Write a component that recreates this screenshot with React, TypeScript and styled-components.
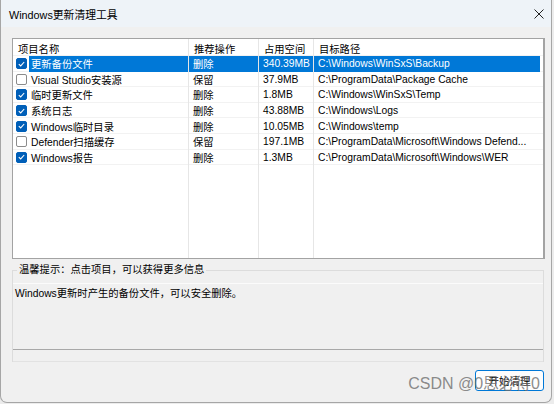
import React from "react"
import styled, { createGlobalStyle } from "styled-components"

const GlobalStyle = createGlobalStyle`
  html, body {
    margin: 0;
    padding: 0;
    background: #ececec;
  }
  body {
    font-family: "Liberation Sans", "Noto Sans CJK SC", sans-serif;
    font-size: 10.3px;
    color: #000;
  }
`

type Item = {
  name: string
  action: string
  size: string
  path: string
  checked: boolean
}

const items: ReadonlyArray<Item> = [
  { name: "更新备份文件", action: "删除", size: "340.39MB", path: "C:\\Windows\\WinSxS\\Backup", checked: true },
  { name: "Visual Studio安装源", action: "保留", size: "37.9MB", path: "C:\\ProgramData\\Package Cache", checked: false },
  { name: "临时更新文件", action: "删除", size: "1.8MB", path: "C:\\Windows\\WinSxS\\Temp", checked: true },
  { name: "系统日志", action: "删除", size: "43.88MB", path: "C:\\Windows\\Logs", checked: true },
  { name: "Windows临时目录", action: "删除", size: "10.05MB", path: "C:\\Windows\\temp", checked: true },
  { name: "Defender扫描缓存", action: "保留", size: "197.1MB", path: "C:\\ProgramData\\Microsoft\\Windows Defend...", checked: false },
  { name: "Windows报告", action: "删除", size: "1.3MB", path: "C:\\ProgramData\\Microsoft\\Windows\\WER", checked: true },
]

const Window = styled.div`
  position: relative;
  width: 550px;
  height: 402px;
  border: 1px solid #a6a6a6;
  border-top: none;
  border-radius: 0 0 7px 7px;
  background: #f0f0f0;
  display: flex;
  flex-direction: column;
  overflow: hidden;
`

const TitleBar = styled.div`
  height: 27px;
  flex: none;
  background: #eef3f8;
  display: flex;
  align-items: center;
  justify-content: space-between;
  padding: 0 7px 0 8px;
  font-size: 10.8px;
`

const Body = styled.div`
  flex: 1;
  display: flex;
  flex-direction: column;
  padding: 11px 6px 0 11px;
`

const List = styled.div`
  height: 219px;
  flex: none;
  background: #fff;
  border: 1px solid #a3a3a3;
  border-right-width: 2px;
  display: flex;
  flex-direction: column;
  overflow: hidden;
`

const Row = styled.div<{ $h?: number }>`
  display: grid;
  grid-template-columns: 176px 70px 55px 1fr;
  height: ${(p) => (p.$h ? `${p.$h}px` : "auto")};
  flex: ${(p) => (p.$h ? "none" : "1")};
  box-shadow: inset 0 -1px 0 ${(p) => (p.$h ? "#f2f2f2" : "transparent")};
`

const Cell = styled.div<{ $sel?: boolean; $last?: boolean }>`
  display: flex;
  align-items: center;
  padding-left: 4px;
  white-space: nowrap;
  overflow: hidden;
  border-right: ${(p) => (p.$last ? "none" : "1px solid #e6e6e6")};
  background: ${(p) => (p.$sel ? "#0078d7" : "transparent")};
  color: ${(p) => (p.$sel ? "#fff" : "#000")};
  margin-right: ${(p) => (p.$last && p.$sel ? "3px" : "0")};
`

const HeaderCell = styled(Cell)`
  padding-left: 5px;
  padding-top: 1px;
`

const NameCell = styled(Cell)`
  padding-left: 3px;
  background: transparent;
`

const NameText = styled.span<{ $sel?: boolean }>`
  flex: 1;
  align-self: stretch;
  display: flex;
  align-items: center;
  margin-left: 2px;
  padding-left: 2px;
  background: ${(p) => (p.$sel ? "#0078d7" : "transparent")};
  color: ${(p) => (p.$sel ? "#fff" : "#000")};
`

const Box = styled.span<{ $on: boolean }>`
  width: 11px;
  height: 11px;
  flex: none;
  box-sizing: border-box;
  border-radius: 2px;
  background: ${(p) => (p.$on ? "#005fb8" : "#fff")};
  border: 1px solid ${(p) => (p.$on ? "#005fb8" : "#8b8b8b")};
  display: flex;
  align-items: center;
  justify-content: center;
`

const Group = styled.div`
  position: relative;
  margin-top: 11px;
  border-top: 1px solid #dcdcdc;
  border-left: 1px solid #dcdcdc;
  border-right: 1px solid #dcdcdc;
  margin-right: 1px;
  display: flex;
  flex-direction: column;
`

const GroupLabel = styled.span`
  position: absolute;
  left: 4px;
  top: -8px;
  padding: 0 2px;
  background: #f0f0f0;
  line-height: 14px;
`

const InfoBox = styled.div`
  margin-top: 12px;
  height: 66px;
  border-top: 1px solid #fbfbfb;
  padding: 3px 2px;
  box-sizing: border-box;
  line-height: 14px;
`

const Progress = styled.div`
  height: 13px;
  box-sizing: border-box;
  border-top: 1px solid #a8a8a8;
  border-bottom: 1px solid #e2e2e2;
  background: #f0f0f0;
`

const Footer = styled.div`
  display: flex;
  justify-content: flex-end;
  padding: 8px 1px 0 0;
`

const Button = styled.button`
  width: 69px;
  height: 21px;
  box-sizing: border-box;
  border: 1px solid #0078d7;
  border-radius: 3px;
  background: #fdfdfd;
  font-family: inherit;
  font-size: 10.5px;
  color: #000;
  padding: 0;
`

const Watermark = styled.span`
  position: absolute;
  right: 11px;
  bottom: 8px;
  font-size: 16px;
  color: rgba(110, 110, 110, 0.8);
  pointer-events: none;
  white-space: nowrap;
`

const Check = () => (
  <svg width="7" height="6" viewBox="0 0 7 6">
    <path d="M0.8 3.1 L2.7 4.9 L6.2 1" fill="none" stroke="#fff" strokeWidth="1.1" />
  </svg>
)

const CloseIcon = () => (
  <svg width="10" height="10" viewBox="0 0 10 10">
    <path d="M0.5 0.5 L9.5 9.5 M9.5 0.5 L0.5 9.5" stroke="#222" strokeWidth="1" />
  </svg>
)

export default function App() {
  const selected = 0
  return (
    <>
      <GlobalStyle />
      <Window>
        <TitleBar>
          <span>Windows更新清理工具</span>
          <CloseIcon />
        </TitleBar>
        <Body>
          <List>
            <Row $h={17}>
              <HeaderCell>项目名称</HeaderCell>
              <HeaderCell>推荐操作</HeaderCell>
              <HeaderCell>占用空间</HeaderCell>
              <HeaderCell $last>目标路径</HeaderCell>
            </Row>
            {items.map((it, i) => {
              const sel = i === selected
              return (
                <Row key={it.name} $h={15.6}>
                  <NameCell>
                    <Box $on={it.checked}>{it.checked && <Check />}</Box>
                    <NameText $sel={sel}>{it.name}</NameText>
                  </NameCell>
                  <Cell $sel={sel}>{it.action}</Cell>
                  <Cell $sel={sel}>{it.size}</Cell>
                  <Cell $sel={sel} $last>{it.path}</Cell>
                </Row>
              )
            })}
            <Row>
              <Cell />
              <Cell />
              <Cell />
              <Cell $last />
            </Row>
          </List>
          <Group>
            <GroupLabel>温馨提示：点击项目，可以获得更多信息</GroupLabel>
            <InfoBox>Windows更新时产生的备份文件，可以安全删除。</InfoBox>
            <Progress />
          </Group>
          <Footer>
            <Button>开始清理</Button>
          </Footer>
        </Body>
        <Watermark>CSDN @0思必得0</Watermark>
      </Window>
    </>
  )
}
